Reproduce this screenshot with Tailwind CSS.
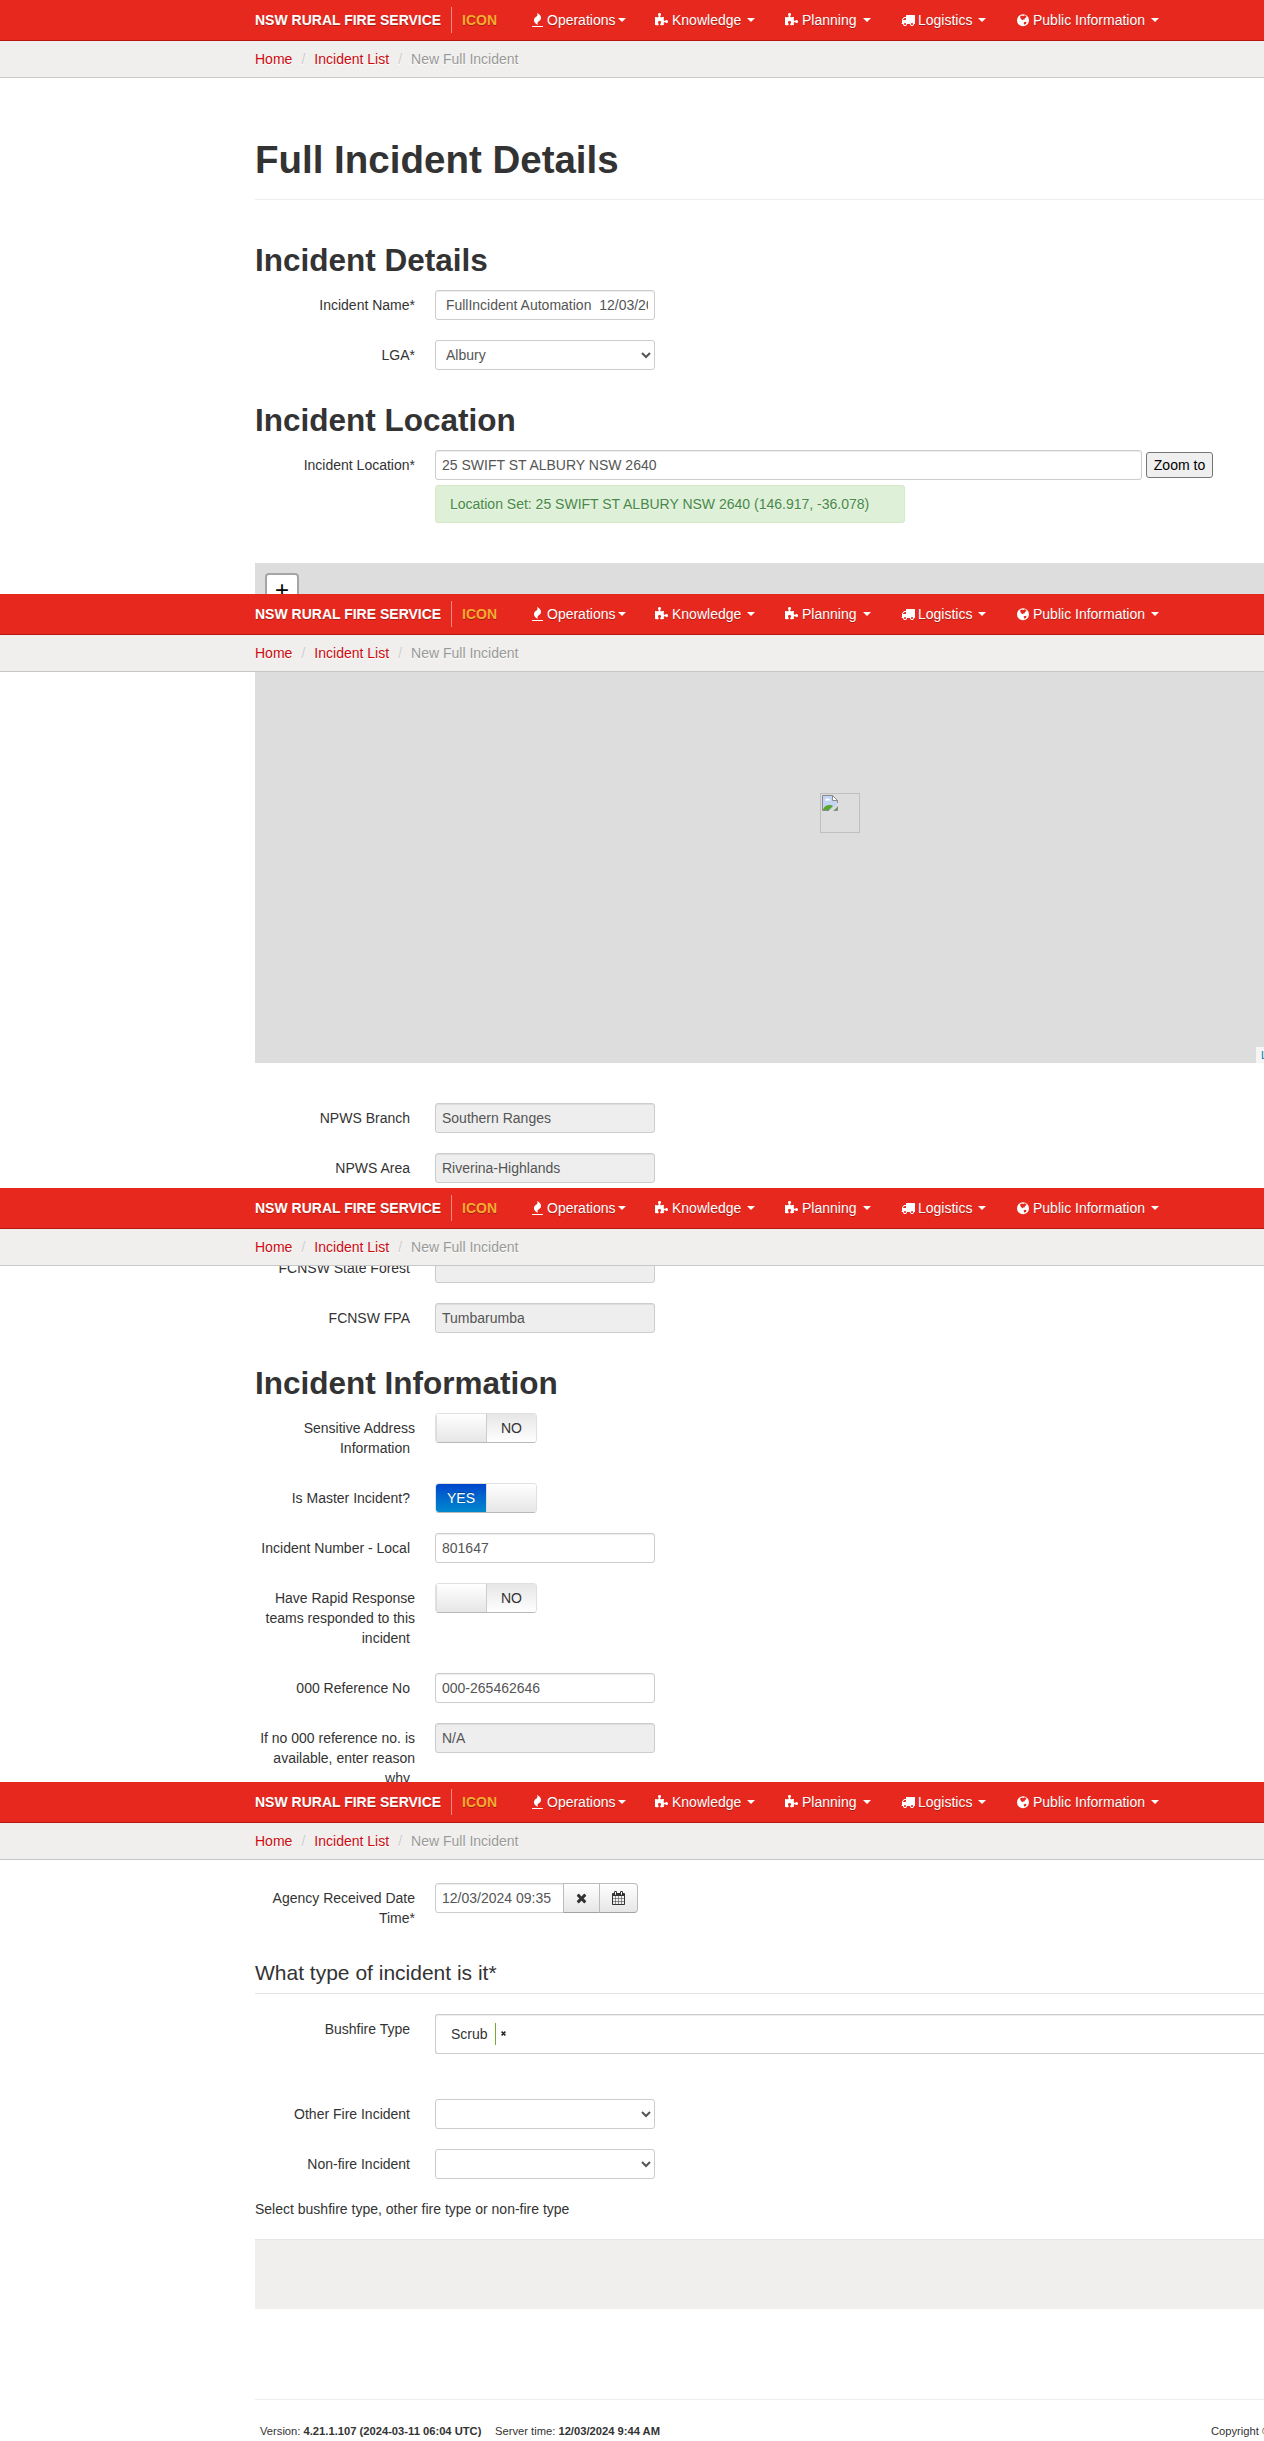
<!DOCTYPE html>
<html lang="en">
<head>
<meta charset="utf-8">
<title>New Full Incident</title>
<script src="https://cdn.jsdelivr.net/npm/@tailwindcss/browser@4"></script>
</head>
<body class="w-[1264px] overflow-x-hidden bg-white font-['Liberation_Sans',Arial,sans-serif] text-[14px] leading-5 text-[#333]">

<svg class="hidden">
  <symbol id="fire" viewBox="0 0 1408 1792"><path transform="matrix(1 0 0 -1 0 1536)" d="M1408 -160v-64q0 -13 -9.5 -22.5t-22.5 -9.5h-1344q-13 0 -22.5 9.5t-9.5 22.5v64q0 13 9.5 22.5t22.5 9.5h1344q13 0 22.5 -9.5t9.5 -22.5zM1152 896q0 -78 -24.5 -144t-64 -112.5t-87.5 -88t-96 -77.5t-87.5 -72t-64 -81.5t-24.5 -96.5q0 -96 67 -224l-4 1l1 -1q-90 41 -160 83t-138.5 100t-113.5 122.5t-72.5 150.5t-27.5 184q0 78 24.5 144t64 112.5t87.5 88t96 77.5t87.5 72t64 81.5t24.5 96.5q0 94 -66 224l3 -1l-1 1q90 -41 160 -83t138.5 -100t113.5 -122.5t72.5 -150.5t27.5 -184z"/></symbol>
  <symbol id="puzzle" viewBox="0 0 1664 1792"><path transform="matrix(1 0 0 -1 0 1536)" d="M1664 438q0 -81 -44.5 -135t-123.5 -54q-41 0 -77.5 17.5t-59 38t-56.5 38t-71 17.5q-110 0 -110 -124q0 -39 16 -115t15 -115v-5q-22 0 -33 -1q-34 -3 -97.5 -11.5t-115.5 -13.5t-98 -5q-61 0 -103 26.5t-42 83.5q0 37 17.5 71t38 56.5t38 59t17.5 77.5q0 79 -54 123.5t-135 44.5q-84 0 -143 -45.5t-59 -127.5q0 -43 15 -83t33.5 -64.5t33.5 -53t15 -50.5q0 -45 -46 -89q-37 -35 -117 -35q-95 0 -245 24q-9 2 -27.5 4t-27.5 4l-13 2q-1 0 -3 1q-2 0 -2 1v1024q2 -1 17.5 -3.5t34 -5t21.5 -3.5q150 -24 245 -24q80 0 117 35q46 44 46 89q0 22 -15 50.5t-33.5 53t-33.5 64.5t-15 83q0 82 59 127.5t144 45.5q80 0 134 -44.5t54 -123.5q0 -41 -17.5 -77.5t-38 -59t-38 -56.5t-17.5 -71q0 -57 42 -83.5t103 -26.5q64 0 180 15t163 17v-2q-1 -2 -3.5 -17.5t-5 -34t-3.5 -21.5q-24 -150 -24 -245q0 -80 35 -117q44 -46 89 -46q22 0 50.5 15t53 33.5t64.5 33.5t83 15q82 0 127.5 -59t45.5 -143z"/></symbol>
  <symbol id="truck" viewBox="0 0 1792 1792"><path transform="matrix(1 0 0 -1 0 1536)" d="M640 128q0 52 -38 90t-90 38t-90 -38t-38 -90t38 -90t90 -38t90 38t38 90zM256 640h384v256h-158q-13 0 -22 -9l-195 -195q-9 -9 -9 -22v-30zM1536 128q0 52 -38 90t-90 38t-90 -38t-38 -90t38 -90t90 -38t90 38t38 90zM1792 1216v-1024q0 -15 -4 -26.5t-13.5 -18.5t-16.5 -11.5t-23.5 -6t-22.5 -2t-25.5 0t-22.5 .5q0 -106 -75 -181t-181 -75t-181 75t-75 181h-384q0 -106 -75 -181t-181 -75t-181 75t-75 181h-64q-3 0 -22.5 -.5t-25.5 0t-22.5 2t-23.5 6t-16.5 11.5t-13.5 18.5t-4 26.5q0 26 19 45t45 19v320q0 8 -.5 35t0 38t2.5 34.5t6.5 37t14 30.5t22.5 30l198 198q19 19 50.5 32t58.5 13h160v192q0 26 19 45t45 19h1024q26 0 45 -19t19 -45z"/></symbol>
  <symbol id="globe" viewBox="0 0 12 14"><circle cx="6" cy="7.2" r="6"/><path fill="#e6281e" d="M3.2 3.2 5 2.4l1.2.6 1.6-.7 1.6 1-.3 1.2-1.2.6-.3 1.3-1.3.2-.9.7L4.500 6.600 3.300 5.100z M6.800 9.200l1.800-.5 1 .7-.8 1.600-1.300.8-.7-1.200z"/></symbol>
  <symbol id="remove" viewBox="0 0 1408 1792"><path transform="matrix(1 0 0 -1 0 1536)" d="M1298 214q0 -40 -28 -68l-136 -136q-28 -28 -68 -28t-68 28l-294 294l-294 -294q-28 -28 -68 -28t-68 28l-136 136q-28 28 -28 68t28 68l294 294l-294 294q-28 28 -28 68t28 68l136 136q28 28 68 28t68 -28l294 -294l294 294q28 28 68 28t68 -28l136 -136q28 -28 28 -68t-28 -68l-294 -294l294 -294q28 -28 28 -68z"/></symbol>
  <symbol id="calendar" viewBox="0 0 1664 1792"><path transform="matrix(1 0 0 -1 0 1536)" d="M128 -128h288v288h-288v-288zM480 -128h320v288h-320v-288zM128 224h288v320h-288v-320zM480 224h320v320h-320v-320zM128 608h288v288h-288v-288zM864 -128h320v288h-320v-288zM480 608h320v288h-320v-288zM1248 -128h288v288h-288v-288zM864 224h320v320h-320v-320zM512 1088v288q0 13 -9.5 22.5t-22.5 9.5h-64q-13 0 -22.5 -9.5t-9.5 -22.5v-288q0 -13 9.500 -22.500t22.500 -9.500h64q13 0 22.500 9.500t9.500 22.500zM1248 224h288v320h-288v-320zM864 608h320v288h-320v-288zM1248 608h288v288h-288v-288zM1280 1088v288q0 13 -9.500 22.500t-22.500 9.500h-64q-13 0 -22.500 -9.500t-9.500 -22.500v-288q0 -13 9.500 -22.500t22.500 -9.500h64q13 0 22.500 9.500t9.500 22.500zM1664 1152v-1280q0 -52 -38 -90t-90 -38h-1408q-52 0 -90 38t-38 90v1280q0 52 38 90t90 38h128v96q0 66 47 113t113 47h64q66 0 113 -47t47 -113v-96h384v96q0 66 47 113t113 47h64q66 0 113 -47t47 -113v-96h128q52 0 90 -38t38 -90z"/></symbol>
  <symbol id="caret" viewBox="0 0 8 4"><path d="M0 0h8L4 4z"/></symbol>
</svg>

<!-- Navigation bar and breadcrumb, repeated above each part of the form -->
<template id="bar">
  <div class="flex h-[41px] items-center border-b border-[#b3160e] bg-[#e6281e] pl-[255px] whitespace-nowrap text-white [text-shadow:0_1px_0_rgba(0,0,0,0.3)]">
    <div class="w-[196px] shrink-0 font-bold">NSW RURAL FIRE SERVICE</div>
    <div class="h-[26px] w-px shrink-0 bg-[#f28a84]"></div>
    <div class="ml-[10px] w-[70px] shrink-0 font-bold text-[#f6ac31]">ICON</div>
    <div class="flex w-[123px] shrink-0 items-center"><svg class="h-[14px] w-[11px] fill-white"><use href="#fire"/></svg><span class="ml-1">Operations</span><svg class="ml-[3px] h-1 w-2 fill-white"><use href="#caret"/></svg></div>
    <div class="flex w-[130px] shrink-0 items-center"><svg class="h-[14px] w-[13px] fill-white"><use href="#puzzle"/></svg><span class="ml-1">Knowledge</span><svg class="ml-[6px] h-1 w-2 fill-white"><use href="#caret"/></svg></div>
    <div class="flex w-[116px] shrink-0 items-center"><svg class="h-[14px] w-[13px] fill-white"><use href="#puzzle"/></svg><span class="ml-1">Planning</span><svg class="ml-[6px] h-1 w-2 fill-white"><use href="#caret"/></svg></div>
    <div class="flex w-[116px] shrink-0 items-center"><svg class="h-[14px] w-[14px] fill-white"><use href="#truck"/></svg><span class="ml-[3px]">Logistics</span><svg class="ml-[6px] h-1 w-2 fill-white"><use href="#caret"/></svg></div>
    <div class="flex shrink-0 items-center"><svg class="h-[14px] w-[12px] fill-white"><use href="#globe"/></svg><span class="ml-1">Public Information</span><svg class="ml-[6px] h-1 w-2 fill-white"><use href="#caret"/></svg></div>
  </div>
  <div class="flex h-[37px] border-b border-[#c8c8c8] bg-[#f0efed] pt-2 pl-[255px] text-[#999] [text-shadow:0_1px_0_#fff]">
    <a class="text-[#cc0a10]">Home</a><span class="w-[22px] text-center text-[#ccc]">/</span><a class="text-[#cc0a10]">Incident List</a><span class="w-[22px] text-center text-[#ccc]">/</span><span>New Full Incident</span>
  </div>
</template>

<section class="h-[594px] overflow-hidden">
  <header class="relative z-10"></header>
  <div class="pt-[62px] pl-[255px]">
    <h1 class="mb-[30px] h-[60px] border-b border-[#eee] text-[38.5px] leading-10 font-bold">Full Incident Details</h1>
    <h2 class="py-[10px] text-[31.5px] leading-10 font-bold">Incident Details</h2>
    <div class="mb-5 flex items-start">
      <label class="w-40 py-[5px] text-right">Incident Name*</label>
      <input class="ml-5 h-[30px] w-[220px] rounded-[3px] border border-[#ccc] bg-white px-1.5 text-[#555] shadow-[inset_0_1px_1px_rgba(0,0,0,0.075)]" value=" FullIncident Automation  12/03/2024">
    </div>
    <div class="mb-5 flex items-start">
      <label class="w-40 py-[5px] text-right">LGA*</label>
      <select class="ml-5 h-[30px] w-[220px] rounded-[3px] border border-[#ccc] bg-white px-1.5 text-[#555]"><option>Albury</option></select>
    </div>
    <h2 class="py-[10px] text-[31.5px] leading-10 font-bold">Incident Location</h2>
    <div class="flex items-start">
      <label class="w-40 py-[5px] text-right">Incident Location*</label>
      <div class="ml-5">
        <div class="flex items-center">
          <input class="h-[30px] w-[707px] rounded-[3px] border border-[#ccc] bg-white px-1.5 text-[#555] shadow-[inset_0_1px_1px_rgba(0,0,0,0.075)]" value="25 SWIFT ST ALBURY NSW 2640">
          <button class="ml-1 h-[26px] w-[67px] shrink-0 rounded-[3px] border border-[#767676] bg-[#efefef] whitespace-nowrap text-black">Zoom to</button>
        </div>
        <div class="mt-[5px] h-[38px] w-[470px] rounded-[3px] border border-[#d6e9c6] bg-[#dff0d8] px-[14px] py-2 text-[#468847] [text-shadow:0_1px_0_rgba(255,255,255,0.5)]">Location Set: 25 SWIFT ST ALBURY NSW 2640 (146.917, -36.078)</div>
      </div>
    </div>
    <div class="mt-10 h-[31px] bg-[#ddd] pt-[10px] pl-[10px]">
      <div class="h-[34px] w-[34px] rounded-[4px] border-2 border-black/25 bg-white bg-clip-padding text-center text-[24px] leading-[30px] text-black">+</div>
    </div>
  </div>
</section>

<section class="h-[594px] overflow-hidden">
  <header class="relative z-10"></header>
  <div class="pl-[255px]">
    <div class="relative mb-10 h-[391px] overflow-hidden bg-[#ddd]">
      <div class="absolute top-[121px] left-[565px] h-10 w-10 border border-[#c0c0c0] p-px">
        <svg class="h-4 w-4" viewBox="0 0 16 16"><path d="M.5.5h10l5 5v10H.5z" fill="#c3d5f5"/><path d="M3 5.500h5.500q0-1.500-1.500-1.500-1-1.500-2.500-.3Q3 4 3 5.500z" fill="#fff"/><path d="M1 15q1-5 7-5 2 0 3 1l-4 4zM12 15l3-3v3z" fill="#5aa62f"/><path d="M10.500.5v5h5" fill="#fff" stroke="#8a8a8a"/><path d="M7 15.500H.5V.5h10l5 5V8M15.500 11v4.500H11" fill="none" stroke="#8a8a8a"/><path d="M16 8.500 7.500 16h3.500l5-5z" fill="#ddd"/></svg>
      </div>
      <div class="absolute bottom-0 left-[1001px] h-4 bg-white/70 px-[5px] text-[11px] leading-4 whitespace-nowrap text-[#0078a8]">Leaflet</div>
    </div>
    <div class="mb-5 flex items-start">
      <label class="w-40 py-[5px] text-right">NPWS Branch<span class="pl-[5px]"></span></label>
      <input class="ml-5 h-[30px] w-[220px] rounded-[3px] border border-[#ccc] bg-[#eee] px-1.5 text-[#555] shadow-[inset_0_1px_1px_rgba(0,0,0,0.075)]" value="Southern Ranges">
    </div>
    <div class="mb-5 flex items-start">
      <label class="w-40 py-[5px] text-right">NPWS Area<span class="pl-[5px]"></span></label>
      <input class="ml-5 h-[30px] w-[220px] rounded-[3px] border border-[#ccc] bg-[#eee] px-1.5 text-[#555] shadow-[inset_0_1px_1px_rgba(0,0,0,0.075)]" value="Riverina-Highlands">
    </div>
  </div>
</section>

<section class="h-[594px] overflow-hidden">
  <header class="relative z-10"></header>
  <div class="-mt-[13px] pl-[255px]">
    <div class="mb-5 flex items-start">
      <label class="w-40 py-[5px] text-right">FCNSW State Forest<span class="pl-[5px]"></span></label>
      <input class="ml-5 h-[30px] w-[220px] rounded-[3px] border border-[#ccc] bg-[#eee] px-1.5 text-[#555]" value="">
    </div>
    <div class="mb-5 flex items-start">
      <label class="w-40 py-[5px] text-right">FCNSW FPA<span class="pl-[5px]"></span></label>
      <input class="ml-5 h-[30px] w-[220px] rounded-[3px] border border-[#ccc] bg-[#eee] px-1.5 text-[#555] shadow-[inset_0_1px_1px_rgba(0,0,0,0.075)]" value="Tumbarumba">
    </div>
    <h2 class="py-[10px] text-[31.5px] leading-10 font-bold">Incident Information</h2>
    <div class="mb-5 flex items-start">
      <label class="w-40 py-[5px] text-right">Sensitive Address Information<span class="pl-[5px]"></span></label>
      <div class="ml-5 flex h-[30px] w-[102px] overflow-hidden rounded-[4px] border border-[#e0e0e0] border-b-[#b9b9b9] text-center leading-7">
        <span class="w-[51px] border-r border-[#ccc] bg-linear-to-b from-white to-[#e6e6e6] shadow-[inset_1px_0_0_#ddd]"></span><span class="w-[49px] bg-linear-to-b from-[#e6e6e6] to-white">NO</span>
      </div>
    </div>
    <div class="mb-5 flex items-start">
      <label class="w-40 py-[5px] text-right">Is Master Incident?<span class="pl-[5px]"></span></label>
      <div class="ml-5 flex h-[30px] w-[102px] overflow-hidden rounded-[4px] border border-[#e0e0e0] border-b-[#b9b9b9] text-center leading-7">
        <span class="w-[50px] bg-linear-to-b from-[#0044cc] to-[#0088cc] text-white [text-shadow:0_-1px_0_rgba(0,0,0,0.25)]">YES</span><span class="w-[50px] border-l border-[#ddd] bg-linear-to-b from-white to-[#e6e6e6]"></span>
      </div>
    </div>
    <div class="mb-5 flex items-start">
      <label class="w-40 py-[5px] text-right">Incident Number - Local<span class="pl-[5px]"></span></label>
      <input class="ml-5 h-[30px] w-[220px] rounded-[3px] border border-[#ccc] bg-white px-1.5 text-[#555] shadow-[inset_0_1px_1px_rgba(0,0,0,0.075)]" value="801647">
    </div>
    <div class="mb-5 flex items-start">
      <label class="w-40 py-[5px] text-right">Have Rapid Response teams responded to this incident<span class="pl-[5px]"></span></label>
      <div class="ml-5 flex h-[30px] w-[102px] overflow-hidden rounded-[4px] border border-[#e0e0e0] border-b-[#b9b9b9] text-center leading-7">
        <span class="w-[51px] border-r border-[#ccc] bg-linear-to-b from-white to-[#e6e6e6] shadow-[inset_1px_0_0_#ddd]"></span><span class="w-[49px] bg-linear-to-b from-[#e6e6e6] to-white">NO</span>
      </div>
    </div>
    <div class="mb-5 flex items-start">
      <label class="w-40 py-[5px] text-right">000 Reference No<span class="pl-[5px]"></span></label>
      <input class="ml-5 h-[30px] w-[220px] rounded-[3px] border border-[#ccc] bg-white px-1.5 text-[#555] shadow-[inset_0_1px_1px_rgba(0,0,0,0.075)]" value="000-265462646">
    </div>
    <div class="mb-5 flex items-start">
      <label class="w-40 py-[5px] text-right">If no 000 reference no. is available, enter reason why<span class="pl-[5px]"></span></label>
      <input class="ml-5 h-[30px] w-[220px] rounded-[3px] border border-[#ccc] bg-[#eee] px-1.5 text-[#555] shadow-[inset_0_1px_1px_rgba(0,0,0,0.075)]" value="N/A">
    </div>
  </div>
</section>

<section class="h-[659px] overflow-hidden">
  <header class="relative z-10"></header>
  <div class="pt-[23px] pl-[255px]">
    <div class="mb-5 flex items-start">
      <label class="w-40 py-[5px] text-right">Agency Received Date Time*</label>
      <div class="ml-5 flex">
        <input class="h-[30px] w-[129px] rounded-l-[3px] border border-[#ccc] bg-white px-1.5 text-[#555] shadow-[inset_0_1px_1px_rgba(0,0,0,0.075)]" value="12/03/2024 09:35">
        <button class="-ml-px flex h-[30px] w-[37px] items-center justify-center border border-[#bbb] border-b-[#a2a2a2] bg-linear-to-b from-white to-[#e6e6e6]"><svg class="h-[14px] w-[11px] fill-[#333]"><use href="#remove"/></svg></button>
        <button class="-ml-px flex h-[30px] w-[39px] items-center justify-center rounded-r-[4px] border border-[#bbb] border-b-[#a2a2a2] bg-linear-to-b from-white to-[#e6e6e6]"><svg class="h-[14px] w-[13px] fill-[#333]"><use href="#calendar"/></svg></button>
      </div>
    </div>
    <h3 class="mb-5 h-[41px] border-b border-[#e5e5e5] text-[21px] leading-10">What type of incident is it*</h3>
    <div class="mb-[45px] flex items-start">
      <label class="w-40 shrink-0 py-[5px] text-right">Bushfire Type<span class="pl-[5px]"></span></label>
      <div class="ml-5 flex h-10 grow items-center rounded-l-[3px] border-y border-l border-[#ccc] pl-[15px] shadow-[inset_0_1px_1px_rgba(0,0,0,0.075)]">
        <span class="w-[44px]">Scrub</span>
        <span class="h-[22px] w-px bg-[#72ac2c]"></span>
        <svg class="mb-px ml-[5px] h-[5px] w-[5px]" viewBox="0 0 5 5"><path d="M.6.6l3.800 3.800M4.400.6L.6 4.400" stroke="#222" stroke-width="1.500"/></svg>
      </div>
    </div>
    <div class="mb-5 flex items-start">
      <label class="w-40 py-[5px] text-right">Other Fire Incident<span class="pl-[5px]"></span></label>
      <select class="ml-5 h-[30px] w-[220px] rounded-[3px] border border-[#ccc] bg-white px-1.5 text-[#555]"><option></option></select>
    </div>
    <div class="mb-5 flex items-start">
      <label class="w-40 py-[5px] text-right">Non-fire Incident<span class="pl-[5px]"></span></label>
      <select class="ml-5 h-[30px] w-[220px] rounded-[3px] border border-[#ccc] bg-white px-1.5 text-[#555]"><option></option></select>
    </div>
    <p class="mb-5">Select bushfire type, other fire type or non-fire type</p>
    <div class="mb-[90px] h-[70px] border-t border-[#e5e5e5] bg-[#f0efed]"></div>
    <footer class="flex border-t border-[#eee] pt-[21px] pl-[5px] text-[11.2px] whitespace-nowrap">
      <div class="w-[235px] shrink-0">Version: <b>4.21.1.107 (2024-03-11 06:04 UTC)</b></div>
      <div class="w-[716px] shrink-0">Server time: <b>12/03/2024 9:44 AM</b></div>
      <div class="shrink-0">Copyright © NSW Rural Fire Service</div>
    </footer>
  </div>
</section>

<script>
  const bar = document.getElementById('bar');
  document.querySelectorAll('section > header').forEach(h => h.append(bar.content.cloneNode(true)));
</script>
</body>
</html>
